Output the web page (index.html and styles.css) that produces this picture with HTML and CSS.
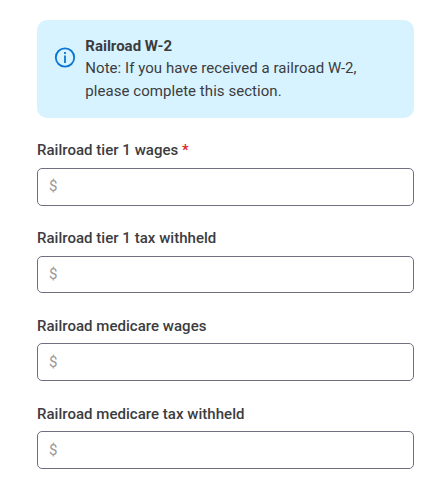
FILE: index.html
```html
<!DOCTYPE html>
<html lang="en">
<head>
    <meta charset="utf-8" />
    <title>Railroad W-2</title>
    <link rel="stylesheet" href="styles.css">
</head>
<body>
    <form>
        <div class="notice">
            <svg class="notice-icon" viewBox="0 0 22 22" width="22" height="22">
                <circle cx="11" cy="10.5" r="9.2" />
                <path d="M11 8.5v7.5M11 5v2" />
            </svg>
            <div class="notice-text">
                <strong>Railroad W-2</strong>
                <p>Note: If you have received a railroad W-2, please complete this section.</p>
            </div>
        </div>

        <div class="field">
            <label for="tier1Wages">Railroad tier 1 wages <span class="required">*</span></label>
            <input id="tier1Wages" type="text" placeholder="$" />
        </div>
        <div class="field">
            <label for="tier1Tax">Railroad tier 1 tax withheld</label>
            <input id="tier1Tax" type="text" placeholder="$" />
        </div>
        <div class="field">
            <label for="medicareWages">Railroad medicare wages</label>
            <input id="medicareWages" type="text" placeholder="$" />
        </div>
        <div class="field">
            <label for="medicareTax">Railroad medicare tax withheld</label>
            <input id="medicareTax" type="text" placeholder="$" />
        </div>
    </form>
</body>
</html>
```

FILE: styles.css
```css
* {
    box-sizing: border-box;
    font-family: Roboto, sans-serif;
}

body {
    margin: 0;
    background-color: white;
    color: #3c3c40;
    font-size: 15px;
}

form {
    padding: 20px 29px 0 37px;
}

.notice {
    display: flex;
    height: 98px;
    padding: 14.6px 17px;
    background-color: #d7f3ff;
    border-radius: 10px;
    line-height: 22.5px;
}

.notice-icon {
    flex: none;
    margin: 12.4px 9.3px 0 0;
    fill: none;
    stroke: #0b76d1;
    stroke-width: 1.8;
}

.notice-text {
    letter-spacing: 0.05px;
}

.notice-text strong {
    letter-spacing: 0;
}

.notice-text p {
    margin: 0;
}

.field {
    height: 87.75px;
    padding-top: 22.3px;
}

.field label {
    display: block;
    line-height: 20px;
    font-weight: 500;
    letter-spacing: 0.03px;
}

.required {
    color: #d9252a;
}

.field input {
    display: block;
    width: 100%;
    height: 37.65px;
    margin-top: 7.6px;
    padding: 0 11px 0.5px;
    border: 1px solid #6f6f80;
    border-radius: 5px;
    font-size: 15px;
}

.field input::placeholder {
    color: #999;
}
```
